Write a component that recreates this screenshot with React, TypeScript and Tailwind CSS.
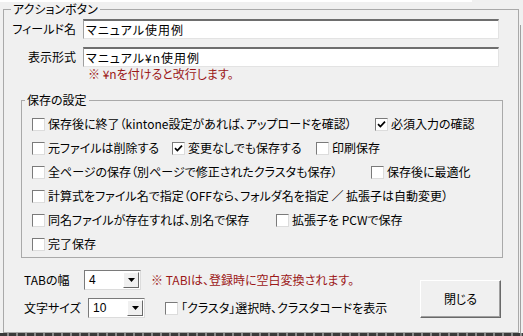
import React from 'react';

function Check({ checked = false }: { checked?: boolean }) {
  return (
    <span className="inline-flex w-[13px] h-[13px] shrink-0 items-center justify-center bg-white border border-t-[#7a7a7a] border-l-[#7a7a7a] border-r-[#dcdcdc] border-b-[#dcdcdc]">
      {checked && (
        <svg width="9" height="9" viewBox="0 0 9 9">
          <path d="M1 4.2 L3.4 6.6 L8 1.6" stroke="#000" strokeWidth="1.7" fill="none" />
        </svg>
      )}
    </span>
  );
}

function CheckItem({ label, checked, className = '' }: { label: string; checked?: boolean; className?: string }) {
  return (
    <div className={`flex items-center gap-[3px] ${className}`}>
      <Check checked={checked} />
      <span className="whitespace-nowrap">{label}</span>
    </div>
  );
}

function Select({ value, className = '' }: { value: string; className?: string }) {
  return (
    <div className={`flex h-[20px] bg-white border border-t-[#7a7a7a] border-l-[#7a7a7a] border-r-[#dcdcdc] border-b-[#dcdcdc] ${className}`}>
      <span className="flex-1 pl-[4px] leading-[18px] font-['Liberation_Sans_Narrow','Liberation_Sans',sans-serif]">{value}</span>
      <span className="w-[16px] flex items-center justify-center bg-[#f0f0f0] border border-t-white border-l-white border-r-[#696969] border-b-[#696969] m-[1px]">
        <svg width="7" height="4" viewBox="0 0 7 4">
          <path d="M0 0 H7 L3.5 4 Z" fill="#000" />
        </svg>
      </span>
    </div>
  );
}

function TextInput({ value }: { value: string }) {
  return (
    <div className="ml-[7px] w-[416px] h-[20px] bg-white border-t-2 border-t-[#6e6e6e] border-l border-l-[#a0a0a0] border-r border-r-[#e3e3e3] border-b border-b-[#e3e3e3] pl-[2px] leading-[17px] whitespace-nowrap tracking-[1px]">
      {value}
    </div>
  );
}

export default function App() {
  return (
    <div className="w-[523px] h-[336px] bg-[#f0f0f0] overflow-hidden flex flex-col text-[12px] text-black [font-feature-settings:'palt'] font-['Noto_Sans_CJK_JP','Noto_Sans',sans-serif]">
      <div className="flex flex-1">
        <div className="w-[519px] flex flex-col">
          <div className="h-[2px] w-[472px] bg-white" />
          <fieldset className="ml-[3px] w-[516px] h-[331px] border border-[#a9a9a9]">
            <legend className="ml-[7px] px-[2px] leading-[14px]">アクションボタン</legend>

            {/* field rows */}
            <div className="mt-[3px] flex items-center">
              <span className="w-[72px] text-right">フィールド名</span>
              <TextInput value="マニュアル使用例" />
            </div>
            <div className="mt-[8px] flex items-center">
              <span className="w-[72px] text-right">表示形式</span>
              <TextInput value="マニュアル¥n使用例" />
            </div>
            <div className="ml-[84px] leading-[14px] text-[#9c1818]">※ ¥nを付けると改行します。</div>

            {/* save settings */}
            <fieldset className="mt-[12px] ml-[17px] w-[482px] border border-[#a9a9a9] pl-[10px] pb-[1px]">
              <legend className="ml-[-7px] px-[2px] leading-[14px]">保存の設定</legend>
              <div className="pt-[5px] flex flex-col">
                <div className="h-[24px] flex items-center">
                  <CheckItem className="w-[343px]" label="保存後に終了（kintone設定があれば、アップロードを確認）" />
                  <CheckItem label="必須入力の確認" checked />
                </div>
                <div className="h-[24px] flex items-center">
                  <CheckItem className="w-[140px]" label="元ファイルは削除する" />
                  <CheckItem className="w-[144px]" label="変更なしでも保存する" checked />
                  <CheckItem label="印刷保存" />
                </div>
                <div className="h-[24px] flex items-center">
                  <CheckItem className="w-[339px]" label="全ページの保存（別ページで修正されたクラスタも保存）" />
                  <CheckItem label="保存後に最適化" />
                </div>
                <div className="h-[24px] flex items-center">
                  <CheckItem label="計算式をファイル名で指定（OFFなら、フォルダ名を指定 ／ 拡張子は自動変更）" />
                </div>
                <div className="h-[24px] flex items-center">
                  <CheckItem className="w-[244px]" label="同名ファイルが存在すれば、別名で保存" />
                  <CheckItem label="拡張子を PCWで保存" />
                </div>
                <div className="h-[24px] flex items-center">
                  <CheckItem label="完了保存" />
                </div>
              </div>
            </fieldset>

            {/* bottom */}
            <div className="flex items-start">
              <div className="flex flex-col pt-[11px] pl-[20px]">
                <div className="h-[22px] flex items-center">
                  <span className="w-[60px]">TABの幅</span>
                  <Select className="w-[57px]" value="4" />
                  <span className="ml-[10px] text-[#9c1818] whitespace-nowrap">※ TABIは、登録時に空白変換されます。</span>
                </div>
                <div className="mt-[6px] h-[22px] flex items-center">
                  <span className="w-[64px]">文字サイズ</span>
                  <Select className="w-[57px]" value="10" />
                  <CheckItem className="ml-[20px]" label="「クラスタ」選択時、クラスタコードを表示" />
                </div>
              </div>
              <button className="ml-auto mr-[17px] mt-[22px] w-[81px] h-[38px] bg-[#f0f0f0] border border-t-white border-l-white border-r-[#696969] border-b-[#696969] shadow-[inset_-1px_-1px_0_#a0a0a0]">
                閉じる
              </button>
            </div>
          </fieldset>
        </div>
        <div className="w-[4px] pt-[25px]">
          <div className="ml-[1px] h-full border-l border-[#a0a0a0]" />
        </div>
      </div>
      <div className="h-[3px] bg-[repeating-linear-gradient(90deg,#3a3a3a_0_7px,#8a8a8a_7px_9px)]" />
    </div>
  );
}
